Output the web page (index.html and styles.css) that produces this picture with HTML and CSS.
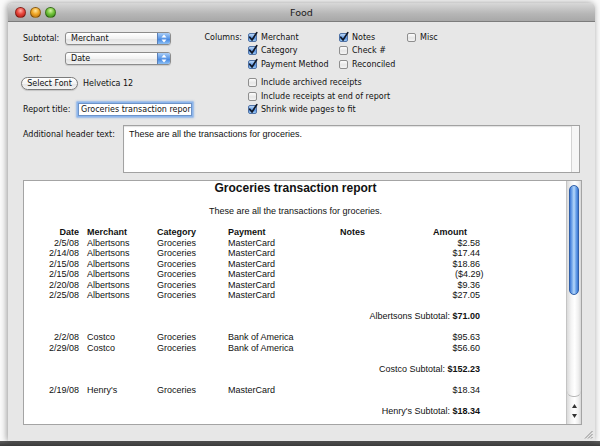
FILE: index.html
```html
<!DOCTYPE html>
<html>
<head>
<meta charset="utf-8">
<title>Food</title>
<link rel="stylesheet" href="styles.css">
</head>
<body>
<div class="window">
  <div class="titlebar">
    <div class="lights">
      <span class="light red"></span>
      <span class="light yellow"></span>
      <span class="light green"></span>
    </div>
    <div class="title">Food</div>
    <div></div>
  </div>
  <div class="content">
    <div class="top">
      <div class="left">
        <div class="row">
          <span class="lbl w42">Subtotal:</span>
          <div class="popup"><span class="ptext">Merchant</span><span class="parrow"><svg width="6" height="9" viewBox="0 0 6 9"><path d="M0.5 3.5 L3 0.5 L5.5 3.5Z M0.5 5.5 L3 8.5 L5.5 5.5Z" fill="#fff"/></svg></span></div>
        </div>
        <div class="row r2">
          <span class="lbl w42">Sort:</span>
          <div class="popup"><span class="ptext">Date</span><span class="parrow"><svg width="6" height="9" viewBox="0 0 6 9"><path d="M0.5 3.5 L3 0.5 L5.5 3.5Z M0.5 5.5 L3 8.5 L5.5 5.5Z" fill="#fff"/></svg></span></div>
        </div>
        <div class="row r3">
          <button class="btn">Select Font</button>
          <span class="fontname">Helvetica 12</span>
        </div>
        <div class="row r4">
          <span class="lbl w55">Report title:</span>
          <div class="field">Groceries transaction repor</div>
        </div>
      </div>
      <div class="right">
        <div class="colgrid">
          <span class="collbl">Columns:</span>
          <label class="cbi"><span class="cb on"><svg viewBox="0 0 10 10"><path d="M1.8 5.2 L4 8 L8.8 0.6" /></svg></span>Merchant</label>
          <label class="cbi"><span class="cb on"><svg viewBox="0 0 10 10"><path d="M1.8 5.2 L4 8 L8.8 0.6" /></svg></span>Notes</label>
          <label class="cbi"><span class="cb"></span>Misc</label>
          <span></span>
          <label class="cbi"><span class="cb on"><svg viewBox="0 0 10 10"><path d="M1.8 5.2 L4 8 L8.8 0.6" /></svg></span>Category</label>
          <label class="cbi"><span class="cb"></span>Check #</label>
          <span></span>
          <span></span>
          <label class="cbi"><span class="cb on"><svg viewBox="0 0 10 10"><path d="M1.8 5.2 L4 8 L8.8 0.6" /></svg></span>Payment Method</label>
          <label class="cbi"><span class="cb"></span>Reconciled</label>
          <span></span>
        </div>
        <div class="opts">
          <label class="cbi"><span class="cb"></span>Include archived receipts</label>
          <label class="cbi"><span class="cb"></span>Include receipts at end of report</label>
          <label class="cbi"><span class="cb on"><svg viewBox="0 0 10 10"><path d="M1.8 5.2 L4 8 L8.8 0.6" /></svg></span>Shrink wide pages to fit</label>
        </div>
      </div>
    </div>
    <div class="hdr">
      <span class="hdrlbl">Additional header text:</span>
      <div class="textarea"><div class="tatext">These are all the transactions for groceries.</div><div class="tastrip"></div></div>
    </div>
    <div class="report">
      <div class="page">
        <div class="rtitle">Groceries transaction report</div>
        <div class="rsub">These are all the transactions for groceries.</div>
        <div class="tbl">
          <div class="tr th"><span class="c1">Date</span><span>Merchant</span><span>Category</span><span>Payment</span><span>Notes</span><span>Amount</span></div>
          <div class="tr"><span class="c1">2/5/08</span><span>Albertsons</span><span>Groceries</span><span>MasterCard</span><span></span><span class="amt">$2.58</span></div>
          <div class="tr"><span class="c1">2/14/08</span><span>Albertsons</span><span>Groceries</span><span>MasterCard</span><span></span><span class="amt">$17.44</span></div>
          <div class="tr"><span class="c1">2/15/08</span><span>Albertsons</span><span>Groceries</span><span>MasterCard</span><span></span><span class="amt">$18.86</span></div>
          <div class="tr"><span class="c1">2/15/08</span><span>Albertsons</span><span>Groceries</span><span>MasterCard</span><span></span><span class="amt neg">($4.29)</span></div>
          <div class="tr"><span class="c1">2/20/08</span><span>Albertsons</span><span>Groceries</span><span>MasterCard</span><span></span><span class="amt">$9.36</span></div>
          <div class="tr"><span class="c1">2/25/08</span><span>Albertsons</span><span>Groceries</span><span>MasterCard</span><span></span><span class="amt">$27.05</span></div>
          <div class="sub">Albertsons Subtotal: <b>$71.00</b></div>
          <div class="tr"><span class="c1">2/2/08</span><span>Costco</span><span>Groceries</span><span>Bank of America</span><span></span><span class="amt">$95.63</span></div>
          <div class="tr"><span class="c1">2/29/08</span><span>Costco</span><span>Groceries</span><span>Bank of America</span><span></span><span class="amt">$56.60</span></div>
          <div class="sub">Costco Subtotal: <b>$152.23</b></div>
          <div class="tr"><span class="c1">2/19/08</span><span>Henry's</span><span>Groceries</span><span>MasterCard</span><span></span><span class="amt">$18.34</span></div>
          <div class="sub">Henry's Subtotal: <b>$18.34</b></div>
        </div>
      </div>
      <div class="scroll">
        <div class="track"><div class="thumb"></div></div>
        <div class="arrows">
          <svg width="5" height="4" viewBox="0 0 5 4"><path d="M0 4 L2.5 0 L5 4Z" fill="#333"/></svg>
          <svg width="5" height="4" viewBox="0 0 5 4"><path d="M0 0 L2.5 4 L5 0Z" fill="#333"/></svg>
        </div>
      </div>
    </div>
  </div>
  <svg class="grip" width="9" height="9" viewBox="0 0 9 9"><path d="M8.5 1 L1 8.5 M8.5 4 L4 8.5 M8.5 7 L7 8.5" stroke="#8a8a8a" stroke-width="1"/></svg>
</div>
<div class="band"></div>
</body>
</html>
```
FILE: styles.css
```css
* { box-sizing: border-box; margin: 0; padding: 0; }
html, body { width: 600px; height: 446px; overflow: hidden; }
body {
  background: #fafafa;
  font-family: "DejaVu Sans", sans-serif;
  font-size: 8px;
  color: #111;
  padding-top: 3px;
  display: flex;
  flex-direction: column;
}
.window {
  margin-left: 8px;
  width: 587px;
  height: 438px;
  flex: none;
  background: #e7e7e7;
  border-radius: 5px 5px 0 0;
  box-shadow: -1px 0 6px rgba(0,0,0,.4);
  position: relative;
  display: flex;
  flex-direction: column;
}
.band { flex: none; height: 5px; background: linear-gradient(#5e5e5e, #3a3a3a); }

.titlebar {
  height: 19px;
  flex: none;
  background: linear-gradient(#d8d8d8, #b6b6b6 60%, #a8a8a8);
  border-bottom: 1px solid #7c7c7c;
  border-radius: 5px 5px 0 0;
  display: grid;
  grid-template-columns: 1fr auto 1fr;
  align-items: center;
}
.lights { display: flex; gap: 4px; padding-left: 7px; padding-top: 1px; }
.light { width: 11px; height: 11px; border-radius: 50%; border: 1px solid rgba(0,0,0,.35); }
.red { background: radial-gradient(circle at 50% 30%, #ffb0a8 0, #e8463c 45%, #a8160c 100%); }
.yellow { background: radial-gradient(circle at 50% 30%, #ffe6a0 0, #f0a828 45%, #b0660a 100%); }
.green { background: radial-gradient(circle at 50% 30%, #d6f5a6 0, #72c33a 45%, #2e7e12 100%); }
.title { font-size: 9.5px; color: #1a1a1a; padding-top: 1px; }

.content { padding: 10px 15px 0 15px; display: flex; flex-direction: column; }
.top { display: flex; }
.left { width: 181px; flex: none; display: flex; flex-direction: column; }
.row { display: flex; align-items: center; height: 13px; }
.r2 { margin-top: 6.5px; }
.r3 { margin-top: 12px; }
.r4 { margin-top: 12px; height: 16px; }
.lbl { flex: none; }
.w42 { width: 42px; }
.w55 { width: 55px; }

.popup {
  width: 106px;
  height: 13px;
  display: flex;
  border: 1px solid #8c8c8c;
  border-radius: 3px;
  background: linear-gradient(#ffffff, #f2f2f2 50%, #e2e2e2 51%, #f0f0f0);
  overflow: hidden;
  box-shadow: 0 1px 1px rgba(0,0,0,.12);
}
.ptext { flex: 1; padding-left: 5px; line-height: 11px; }
.parrow {
  width: 13px;
  background: linear-gradient(#a9cdf7, #5b97e6 50%, #3f80dd 51%, #8cc0f6);
  border-left: 1px solid #5a80b8;
  display: flex;
  align-items: center;
  justify-content: center;
}

.btn {
  margin-left: -2px;
  width: 57px;
  height: 13px;
  border: 1px solid #7c7c7c;
  border-radius: 7px;
  background: linear-gradient(#ffffff, #f3f3f3 50%, #e4e4e4 51%, #f4f4f4);
  font-family: "DejaVu Sans", sans-serif;
  font-size: 8px;
  color: #111;
  line-height: 11px;
  box-shadow: 0 1px 1px rgba(0,0,0,.15);
}
.fontname { margin-left: 5px; }

.field {
  width: 114px;
  height: 13px;
  background: #fff;
  border: 1px solid #6d93c8;
  box-shadow: 0 0 0 1.5px #8db6ec, 0 0 2px 2px rgba(100,150,225,.45);
  padding-left: 2px;
  line-height: 11px;
  white-space: nowrap;
  overflow: hidden;
}

.right { margin-top: -1.5px; }
.colgrid { display: grid; grid-template-columns: 44px 91px 68px auto; grid-auto-rows: 13.5px; align-items: center; }
.collbl { padding-left: 0.5px; }
.cbi { display: flex; align-items: center; gap: 4px; white-space: nowrap; }
.cb {
  position: relative;
  width: 9px;
  height: 9px;
  flex: none;
  border: 1px solid #8e8e8e;
  border-radius: 2px;
  background: linear-gradient(#fdfdfd, #e6e6e6 55%, #f4f4f4);
}
.cb.on {
  border-color: #4f72a6;
  background: linear-gradient(#b9d6f7, #6ca1e6 50%, #4d88de 51%, #9ccaf6);
}
.cb svg { position: absolute; left: -1px; top: -2px; width: 10px; height: 10px; overflow: visible; }
.cb svg path { fill: none; stroke: #101828; stroke-width: 1.7; stroke-linecap: round; stroke-linejoin: round; }
.opts { margin-left: 44px; margin-top: 5px; display: grid; grid-auto-rows: 13.5px; align-items: center; }

.hdr { display: flex; margin-top: 7.5px; }
.hdrlbl { width: 100px; flex: none; padding-top: 4.5px; line-height: 9px; }
.textarea {
  width: 457px;
  height: 48px;
  background: #fff;
  border: 1px solid #a2a2a2;
  box-shadow: inset 0 1px 1px rgba(0,0,0,.12);
  display: flex;
}
.tatext { flex: 1; padding: 3px 0 0 5px; font-family: "Liberation Sans", Arial, sans-serif; font-size: 9px; line-height: 10px; }
.tastrip { width: 8px; border-left: 1px solid #d4d4d4; background: #f6f6f6; }

.report {
  margin-top: 7px;
  width: 559px;
  height: 245px;
  background: #fff;
  border: 1px solid #a4a4a4;
  display: flex;
  font-family: "Liberation Sans", Arial, sans-serif;
  font-size: 9px;
  color: #111;
}
.page { flex: 1; padding-left: 1px; }
.rtitle { font-size: 12px; font-weight: bold; line-height: 14px; text-align: center; }
.rsub { margin-top: 10.75px; line-height: 10.5px; text-align: center; }
.tbl { margin-top: 11px; width: 455px; }
.tr { display: grid; grid-template-columns: 62px 70px 71px 112px 93px 47px; height: 10.5px; line-height: 10.5px; white-space: nowrap; }
.th { font-weight: bold; }
.c1 { text-align: right; padding-right: 8px; }
.amt { text-align: right; }
.neg { margin-right: -3.5px; }
.sub { height: 10.5px; line-height: 10.5px; margin: 10.5px 0; text-align: right; }

.scroll {
  width: 15px;
  flex: none;
  border-left: 1px solid #c4c4c4;
  display: flex;
  flex-direction: column;
  background: linear-gradient(to right, #dadada, #f4f4f4 30%, #ffffff 55%, #f0f0f0 80%, #d8d8d8);
}
.track { flex: 1; padding: 4px 0 0 2px; border-bottom: 1px solid #b8b8b8; border-radius: 0 0 6px 6px; }
.thumb {
  width: 10px;
  height: 110px;
  border-radius: 5px;
  border: 1px solid #2f5fa8;
  background: linear-gradient(to right, #3d78d6, #8ebcf1 35%, #b8d8fa 50%, #6aa3ea 75%, #3c76d3);
}
.arrows { height: 27px; display: flex; flex-direction: column; align-items: center; justify-content: center; gap: 6px; }
.grip { position: absolute; right: 2px; bottom: 2px; }
```
